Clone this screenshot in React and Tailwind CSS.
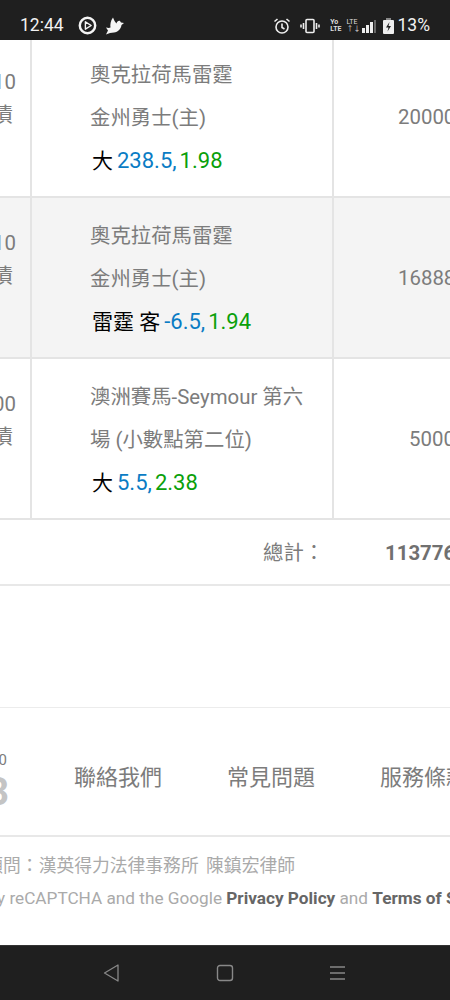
import React from "react";

const F = { fontFamily: '"Roboto","Noto Sans CJK TC",sans-serif' };

function Row({ clipA, title1, title2, pick, line, odds, amount, shaded, amountCls }) {
  return (
    <div className={`flex h-[161px] shrink-0 border-b-2 border-[#e4e4e4] ${shaded ? "bg-[#f4f4f4]" : "bg-white"}`}>
      <div className="w-[30px] shrink-0 overflow-hidden pt-[29px] flex flex-col items-end text-[20.4px] leading-[33px] text-[#7c7c7c]">
        <span className="whitespace-nowrap pr-[14px]">{clipA}</span>
        <span className="whitespace-nowrap pr-[17px]">債</span>
      </div>
      <div className="w-[304px] shrink-0 border-x-2 border-[#e4e4e4] pl-[58px] pr-[20px] pt-[17px]">
        <div className="text-[20.4px] leading-[43px] text-[#7c7c7c]">
          <div>{title1}</div>
          <div>{title2}</div>
        </div>
        <div className="mt-[1px] pl-[2px] text-[22px] leading-[40px] whitespace-nowrap flex items-baseline">
          <span className="text-[21px] text-black">{pick}</span>
          <span className="text-[#0a7cc4] ml-[4px]">{line},</span>
          <span className="text-[#0aa00a] ml-[3px]">{odds}</span>
        </div>
      </div>
      <div className={`flex-1 pt-[60px] whitespace-nowrap text-[20.4px] leading-[40px] text-[#7c7c7c] ${amountCls}`}>{amount}</div>
    </div>
  );
}

export default function App() {
  return (
    <div style={F} className="w-[450px] h-[1000px] overflow-hidden bg-white flex flex-col">
      <div className="h-[40px] shrink-0 bg-[#1f1f1f] flex items-center pt-[11px] pl-[20px] pr-[20px] text-white relative z-10">
        <span className="text-[17.5px] text-[#f2f2f2]">12:44</span>
        <svg className="ml-[14px]" width="19" height="19" viewBox="0 0 18 18" fill="none">
          <circle cx="9" cy="9" r="7.3" stroke="#f4f4f4" strokeWidth="2.3" />
          <path d="M7 5.500L12.500 9L7 12.500Z" fill="none" stroke="#f4f4f4" strokeWidth="1.300" strokeLinejoin="round" />
        </svg>
        <svg className="ml-[8px]" width="20" height="20" viewBox="0 0 20 20" fill="#f4f4f4">
          <path d="M1 18.500 L3 14.500 L1 11.500 C3 12 4.500 12 5.500 11.500 C5 8.500 5.500 5 8 1.500 C9 4 10 6 11.500 7.500 C12 5.500 13.500 4.500 15 5 L16 6.500 L19 7 L16.500 9 C16 13 13 16 9 16.500 L5 17 Z" />
        </svg>
        <div className="flex-1" />
        <svg width="18" height="18" viewBox="0 0 18 18" fill="none" stroke="#eee" strokeWidth="1.600">
          <circle cx="9" cy="10" r="6" />
          <path d="M9 6.500V10.500L11.500 12M1.500 4.500L4.500 2M16.500 4.500L13.500 2" />
        </svg>
        <svg className="ml-[9px]" width="20" height="16" viewBox="0 0 20 16" fill="none" stroke="#eee" strokeWidth="1.600">
          <rect x="6" y="1.500" width="8" height="13" rx="1" />
          <path d="M3.500 5v6M1 6.500v3M16.500 5v6M19 6.500v3" />
        </svg>
        <div className="ml-[10px] flex flex-col text-[7px] leading-[7px] font-bold text-[#ddd]">
          <span>Yo</span>
          <span>LTE</span>
        </div>
        <div className="ml-[5px] flex items-end gap-[1px]">
          <div className="flex flex-col text-[7px] leading-[7px] text-[#ddd]">
            <span>LTE</span>
            <span>↑↓</span>
          </div>
          <div className="flex items-end gap-[1px]">
            <div className="w-[3px] h-[5px] bg-[#eee]" />
            <div className="w-[3px] h-[8px] bg-[#eee]" />
            <div className="w-[3px] h-[11px] bg-[#eee]" />
            <div className="w-[2px] h-[13px] bg-[#666]" />
          </div>
        </div>
        <svg className="ml-[7px]" width="11" height="16" viewBox="0 0 11 16">
          <rect x="3" y="0" width="5" height="2" fill="#888" />
          <rect x="0" y="2" width="11" height="14" rx="1" fill="#eee" />
          <path d="M6.500 4L3 9.500h2.500L4.500 13.500 8 8H5.500z" fill="#1f1f1f" />
        </svg>
        <span className="ml-[4px] text-[17.5px] text-[#f2f2f2]">13%</span>
      </div>

      <div className="flex-1 min-h-0 flex flex-col overflow-hidden">
        <div className="flex flex-col mt-[-3px]">
          <Row clipA="10" title1="奧克拉荷馬雷霆" title2="金州勇士(主)" pick="大" line="238.5" odds="1.98" amount="20000" amountCls="pl-[64px]" />
          <Row shaded clipA="10" title1="奧克拉荷馬雷霆" title2="金州勇士(主)" pick="雷霆 客" line="-6.5" odds="1.94" amount="16888" amountCls="pl-[64px]" />
          <Row clipA="00" title1="澳洲賽馬-Seymour 第六" title2="場 (小數點第二位)" pick="大" line="5.5" odds="2.38" amount="5000" amountCls="pl-[75px]" />
        </div>
        <div className="h-[66px] shrink-0 border-b-2 border-[#e8e8e8] flex text-[#7c7c7c] text-[20.4px] leading-[66px]">
          <span className="ml-[263px] w-[122px] shrink-0">總計：</span>
          <span className="font-bold whitespace-nowrap text-[#707070]">113776</span>
        </div>
        <div className="h-[122px] shrink-0 border-b border-[#ececec]" />
        <div className="h-[129px] shrink-0 border-b-2 border-[#e8e8e8] flex">
          <div className="w-[10px] shrink-0 overflow-hidden flex flex-col items-end pt-[42px] mr-[64px]">
            <span className="text-[15px] leading-[20px] text-[#7c7c7c] whitespace-nowrap pr-[3px]">0</span>
            <span className="text-[38px] leading-[44px] font-bold text-[#c4c4c4] mr-[1px]">3</span>
          </div>
          <div className="flex items-center text-[22px] text-[#7c7c7c] whitespace-nowrap pt-[12px] gap-[65px]">
            <span>聯絡我們</span>
            <span>常見問題</span>
            <span>服務條款</span>
          </div>
        </div>
        <div className="h-[108px] shrink-0 overflow-hidden text-[#aaa] pt-[17px]">
          <div className="w-[295px] flex justify-end text-[17.8px] leading-[24px] whitespace-nowrap [word-spacing:3px]">
            <span>法律顧問：漢英得力法律事務所 陳鎮宏律師</span>
          </div>
          <div className="ml-[-3px] mt-[8px] text-[17.2px] leading-[24px] whitespace-nowrap">
            y reCAPTCHA and the Google <b className="text-[#666]">Privacy Policy</b> and <b className="text-[#666]">Terms of Service</b>
          </div>
        </div>
      </div>

      <div className="h-[55px] shrink-0 bg-[#1f1f1f] border-t border-[#333] flex items-center">
        <svg className="ml-[103px]" width="16" height="18" viewBox="0 0 16 18" fill="none" stroke="#888" strokeWidth="1.300" strokeLinejoin="round">
          <path d="M15 1V17L1.500 9Z" />
        </svg>
        <svg className="ml-[97px]" width="18" height="18" viewBox="0 0 18 18" fill="none" stroke="#888" strokeWidth="1.400">
          <rect x="1.500" y="1.500" width="15" height="15" rx="2.500" />
        </svg>
        <svg className="ml-[94px]" width="18" height="18" viewBox="0 0 18 18" fill="none" stroke="#888" strokeWidth="1.300">
          <path d="M2 3H17M2 9H17M2 15H17" />
        </svg>
      </div>
    </div>
  );
}
